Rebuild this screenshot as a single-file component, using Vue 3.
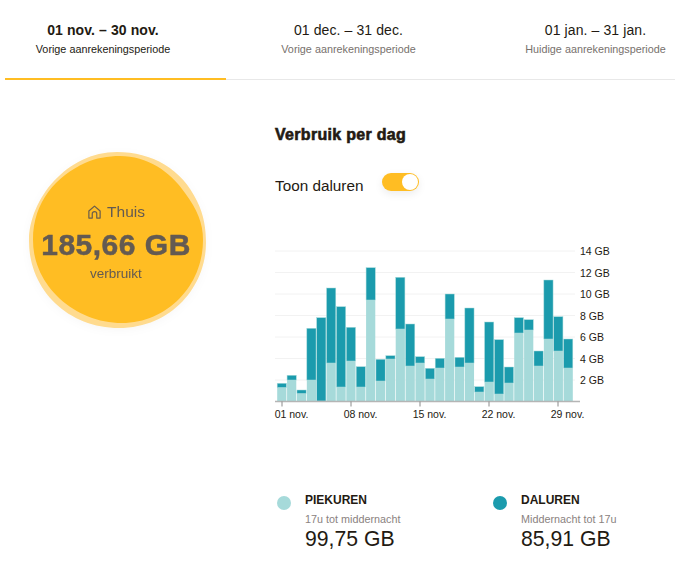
<template>
  <div class="page">
    <nav class="tabs">
      <div v-for="(tab, i) in tabs" :key="tab.range" class="tab" :class="{ active: i === 0 }">
        <div class="range">{{ tab.range }}</div>
        <div class="label">{{ tab.label }}</div>
      </div>
    </nav>

    <div class="content">
      <div class="left">
        <div class="blob">
          <svg class="blob-bg" width="180" height="180" viewBox="0 0 180 180">
            <path
              fill="#ffdb8f"
              d="M90 1C125 1 155 18 170 50C177 64 179 78 179 92C179 135 145 177 92 177C42 177 2 140 2 90C2 48 40 1 90 1Z"
            />
            <path
              fill="#ffbd23"
              d="M93 5C120 5 143 20 158 42C170 58 176 72 176 89C176 135 140 172 95 172C48 172 6 135 6 89C6 50 30 25 58 12C69 7 81 5 93 5Z"
            />
          </svg>
          <div class="blob-text">
            <div class="place">
              <svg width="15" height="16" viewBox="0 0 16 17" fill="none" stroke="#6b5d4b" stroke-width="1.3">
                <path d="M2 7.5L8 2.2L14 7.5V15H10.4V10.3C10.4 9 9.4 8.2 8 8.2C6.6 8.2 5.6 9 5.6 10.3V15H2Z" stroke-linejoin="round" />
              </svg>
              <span>Thuis</span>
            </div>
            <div class="total">185,66 GB</div>
            <div class="used">verbruikt</div>
          </div>
        </div>
      </div>

      <div class="right">
        <h2 class="title">Verbruik per dag</h2>
        <div class="toggle-row">
          <span>Toon daluren</span>
          <span class="toggle"><span class="knob"></span></span>
        </div>

        <svg class="chart" width="320" height="190" viewBox="0 0 320 190">
          <g v-for="t in ticks" :key="t.label">
            <line x1="0" :x2="300" :y1="t.y" :y2="t.y" stroke="#f2f2f2" stroke-width="1" />
            <text x="305" :y="t.y + 4" class="axis">{{ t.label }}</text>
          </g>
          <g v-for="b in bars" :key="b.x">
            <rect :x="b.x" :y="b.top" width="9.2" :height="b.split - b.top" fill="#1b9bad" stroke="#a6dada" stroke-width="0.5" />
            <rect :x="b.x" :y="b.split" width="9.2" :height="base - b.split" fill="#a6dada" />
          </g>
          <line x1="0" x2="305" :y1="base" :y2="base" stroke="#b5b5b5" stroke-width="1.5" />
          <g v-for="d in dates" :key="d.label">
            <line :x1="d.x" :x2="d.x" :y1="base" :y2="base + 5" stroke="#8a8a8a" />
            <text :x="d.x + 9.5" :y="base + 16" text-anchor="middle" class="axis">{{ d.label }}</text>
          </g>
        </svg>
      </div>
    </div>

    <div class="legend">
      <div v-for="l in legend" :key="l.name" class="legend-item">
        <span class="dot" :style="{ background: l.color }"></span>
        <div>
          <div class="legend-name">{{ l.name }}</div>
          <div class="legend-sub">{{ l.sub }}</div>
          <div class="legend-value">{{ l.value }}</div>
        </div>
      </div>
    </div>
  </div>
</template>

<script setup>
const tabs = [
  { range: "01 nov. – 30 nov.", label: "Vorige aanrekeningsperiode" },
  { range: "01 dec. – 31 dec.", label: "Vorige aanrekeningsperiode" },
  { range: "01 jan. – 31 jan.", label: "Huidige aanrekeningsperiode" },
];

// chart is 320 wide, its left edge sits at x=275 of the page
const base = 161.5;

const ticks = [14, 12, 10, 8, 6, 4, 2].map((gb) => ({
  label: gb + " GB",
  y: base - gb * 10.75,
}));

// per day: top of the bar and top of the light part, in px below the chart top
const raw = [
  [143.3, 147.7], [135.3, 140], [150, 153.7], [88.3, 140], [77.7, 161],
  [48, 123], [66.7, 147], [87.3, 121], [126.7, 147], [27.7, 60],
  [119.3, 141], [115.7, 119], [37.3, 89], [84, 126], [116.7, 123],
  [128.3, 139], [118.3, 128], [54, 79], [117.3, 127], [68, 123],
  [146.7, 152], [82, 142], [99.7, 154], [127, 143], [77.7, 93],
  [79.7, 90], [111, 126], [40, 99], [76.7, 111], [99, 128],
];

const bars = raw.map(([top, split], i) => ({
  x: 2.2 + i * 9.876,
  top,
  split,
}));

const dates = [
  { label: "01 nov.", x: 7 },
  { label: "08 nov.", x: 76 },
  { label: "15 nov.", x: 145 },
  { label: "22 nov.", x: 214 },
  { label: "29 nov.", x: 283 },
];

const legend = [
  { name: "PIEKUREN", sub: "17u tot middernacht", value: "99,75 GB", color: "#a6dada" },
  { name: "DALUREN", sub: "Middernacht tot 17u", value: "85,91 GB", color: "#1b9bad" },
];
</script>

<style>
html,
body {
  background: #fff;
}
</style>

<style scoped>
.page {
  width: 675px;
  height: 578px;
  overflow: hidden;
  font-family: "Liberation Sans", Arial, sans-serif;
  color: #231a12;
}

.tabs {
  display: flex;
  margin-left: 5px;
  height: 80px;
  border-bottom: 1px solid #e8e8e8;
  box-sizing: border-box;
}

.tab {
  width: 221px;
  padding: 22px 25px 0 0;
  text-align: center;
  box-sizing: border-box;
  margin-bottom: -1px;
  height: 80px;
  flex: none;
}

.tab:nth-child(2) {
  width: 245px;
  padding-right: 0;
}

.tab:nth-child(3) {
  width: 204px;
  padding: 22px 0 0 45px;
}

.tab.active {
  border-bottom: 2px solid #ffbd23;
}

.range {
  font-size: 14px;
  line-height: 16px;
  letter-spacing: 0.1px;
}

.active .range {
  font-weight: bold;
}

.label {
  font-size: 10.8px;
  line-height: 14px;
  margin-top: 4px;
  color: #77716d;
}

.active .label {
  color: #231a12;
}

.content {
  display: flex;
}

.left {
  width: 270px;
  padding: 71px 0 0 27px;
  box-sizing: border-box;
  flex: none;
}

.blob {
  position: relative;
  width: 180px;
  height: 180px;
  filter: drop-shadow(0 2px 4px rgba(0, 0, 0, 0.03));
}

.blob-bg {
  display: block;
  overflow: visible;
}

.blob-text {
  position: absolute;
  inset: 0;
  padding: 52px 2px 0 0;
  text-align: center;
  color: #635a52;
}

.place {
  display: flex;
  justify-content: center;
  align-items: center;
  gap: 5px;
  font-size: 15.5px;
  line-height: 18px;
}

.total {
  font-size: 30px;
  line-height: 32px;
  margin-top: 8px;
  font-weight: bold;
  -webkit-text-stroke: 0.5px #635a52;
  letter-spacing: 0.5px;
}

.used {
  font-size: 13.5px;
  line-height: 14px;
  margin-top: 6px;
}

.right {
  width: 400px;
  padding: 45px 0 0 5px;
  box-sizing: border-box;
}

.title {
  margin: 0;
  font-size: 16px;
  line-height: 20px;
  font-weight: bold;
  -webkit-text-stroke: 0.6px #231a12;
  letter-spacing: 0.3px;
}

.toggle-row {
  display: flex;
  align-items: center;
  gap: 19px;
  margin-top: 31px;
  font-size: 15.3px;
  line-height: 20px;
}

.toggle {
  position: relative;
  width: 37px;
  height: 18px;
  border-radius: 9px;
  background: #ffbd23;
  box-shadow: 0 3px 8px rgba(0, 0, 0, 0.08);
  margin-top: -9px;
}

.knob {
  position: absolute;
  right: 1px;
  top: 1px;
  width: 16px;
  height: 16px;
  border-radius: 50%;
  background: #fff;
}

.chart {
  display: block;
  margin-top: 44px;
  overflow: visible;
}

.axis {
  font-size: 10.5px;
  fill: #231a12;
}

.legend {
  display: flex;
  padding: 0 0 0 277px;
  margin-top: 63px;
}

.legend-item {
  display: flex;
  flex: none;
  width: 216px;
  gap: 14px;
}

.dot {
  width: 14px;
  height: 14px;
  border-radius: 50%;
  margin-top: 3px;
  flex: none;
}

.legend-name {
  font-size: 12px;
  line-height: 14px;
  font-weight: bold;
}

.legend-sub {
  font-size: 10.8px;
  line-height: 12px;
  margin-top: 6px;
  color: #8a8280;
}

.legend-value {
  font-size: 21.2px;
  line-height: 24px;
  margin-top: 2px;
}
</style>
